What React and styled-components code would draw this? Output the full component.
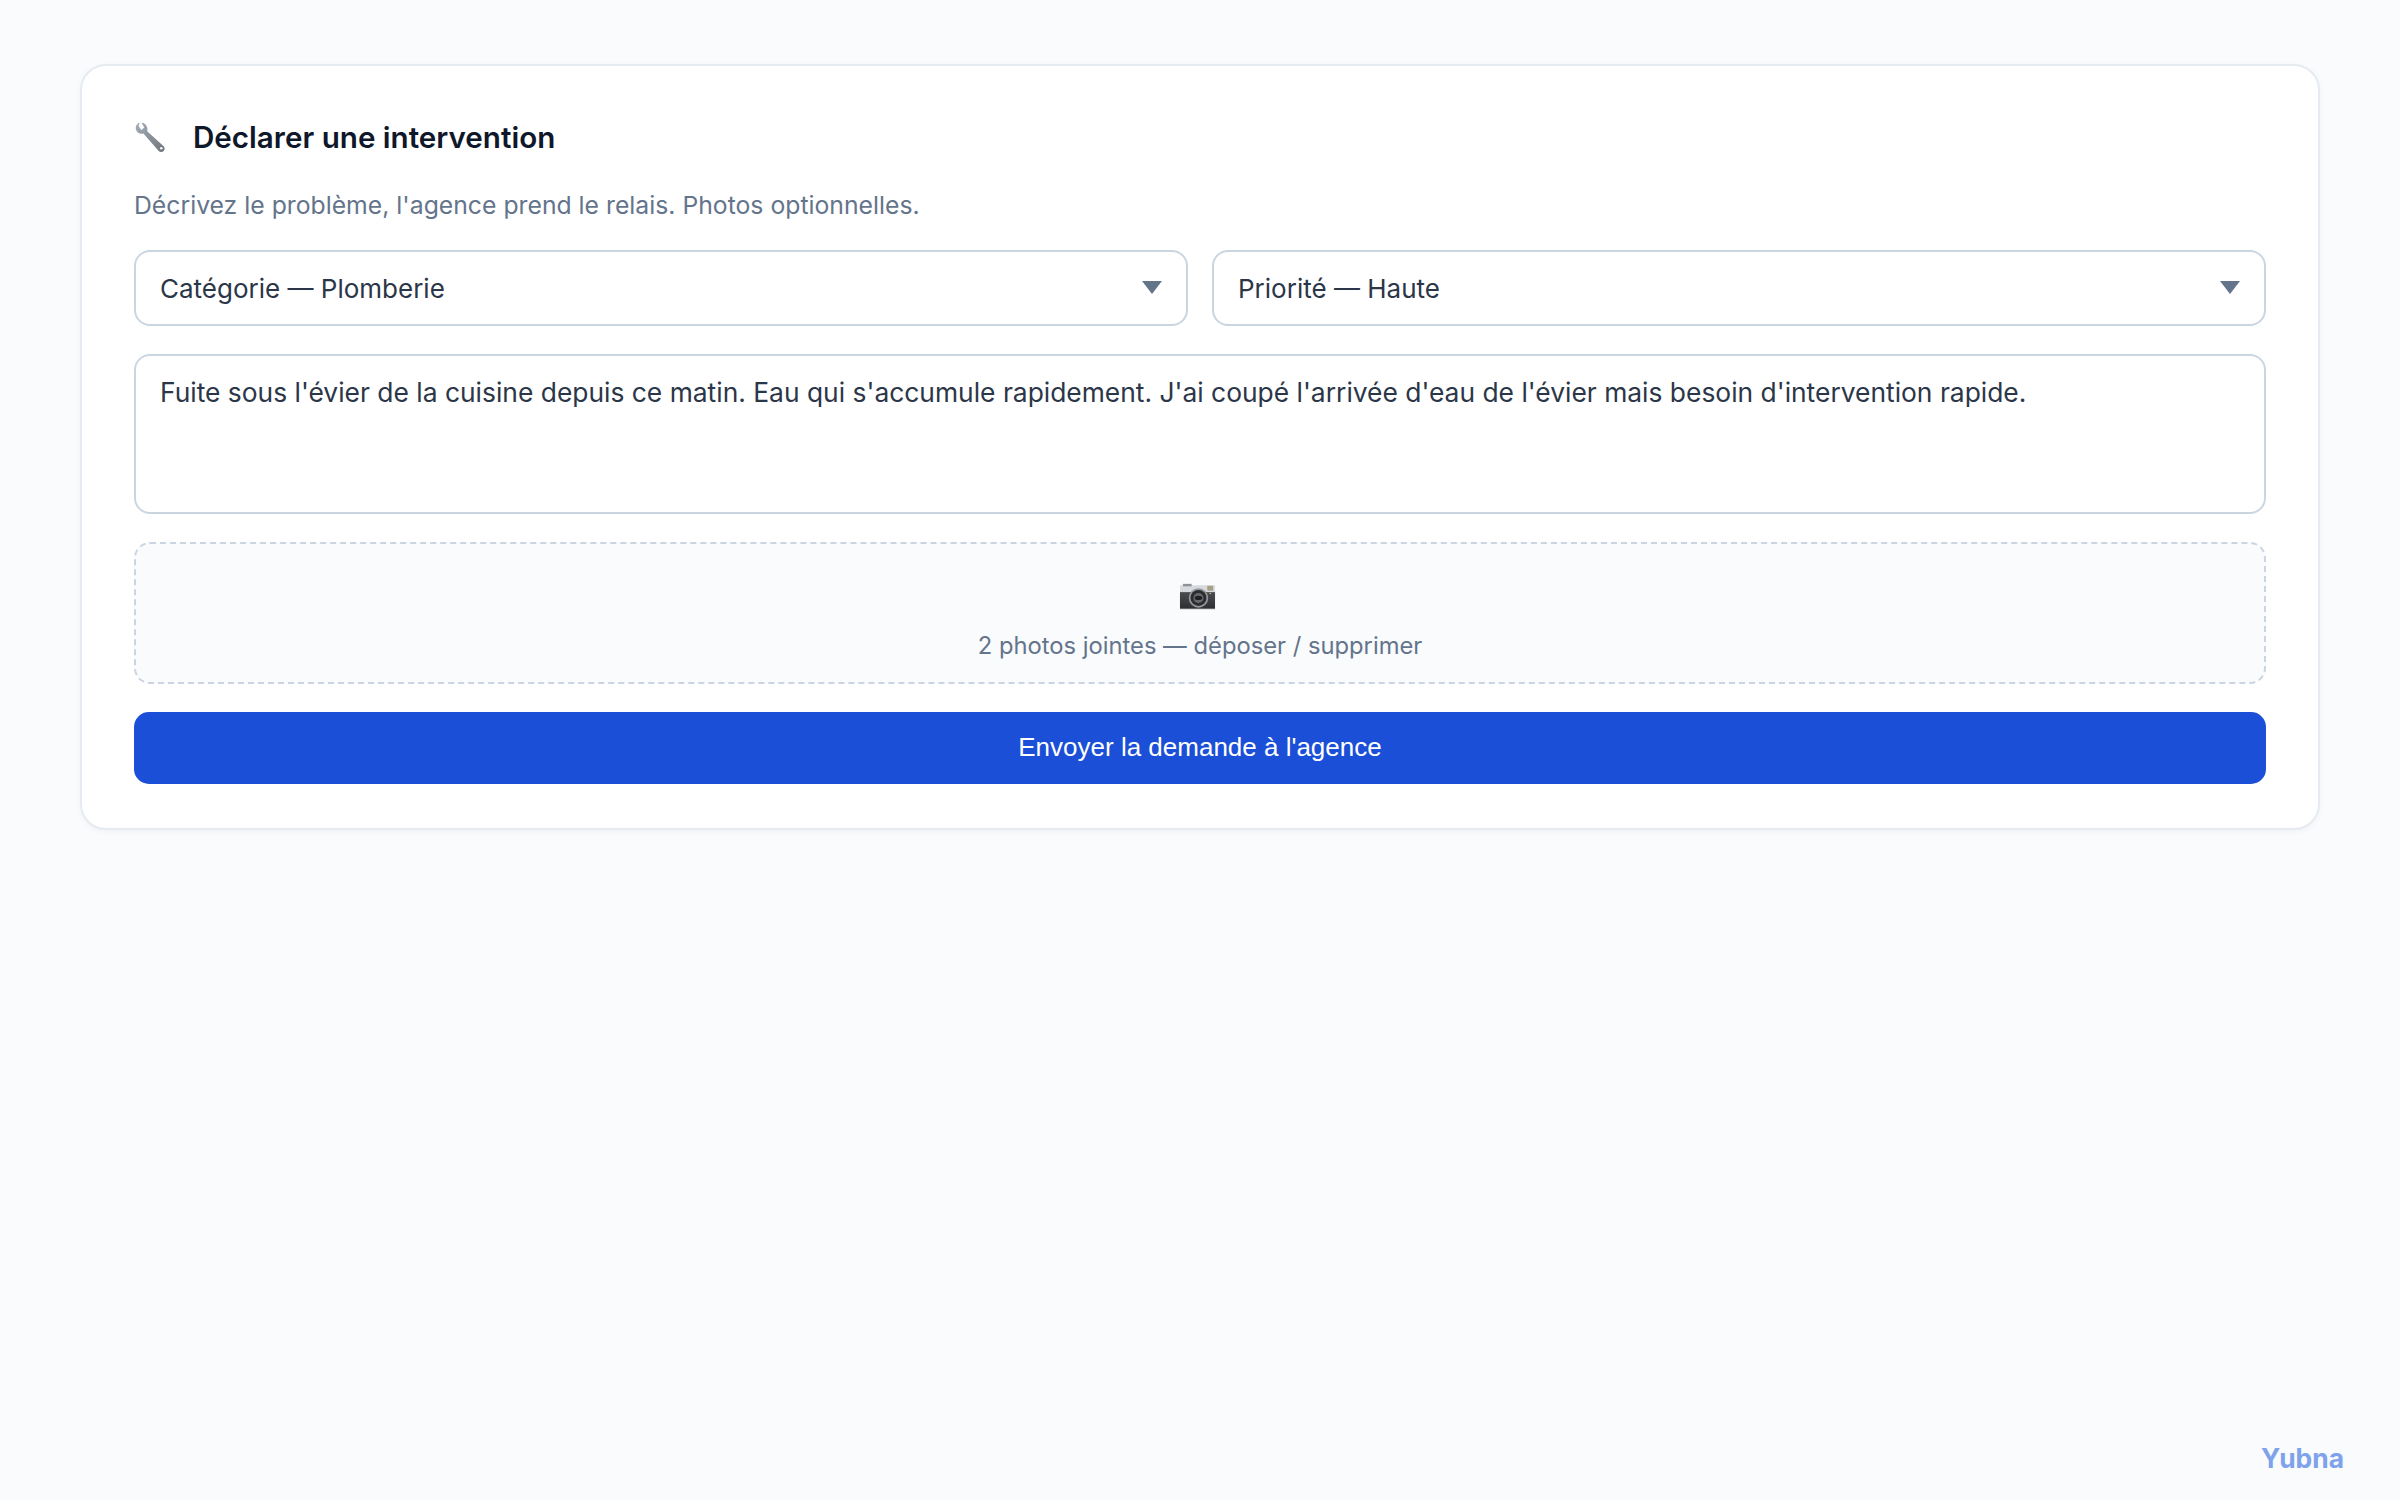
import React from "react";
import styled, { createGlobalStyle } from "styled-components";

const Global = createGlobalStyle`
  html, body { margin: 0; padding: 0; background: #f9fbfd; }
  * { box-sizing: border-box; }
  body { font-family: Inter, "Liberation Sans", sans-serif; }
`;
const Page = styled.div`
  position: relative;
  height: 1500px;
  padding: 64px 80px 0;
`;
const Card = styled.section`
  background: #fff;
  border: 2px solid #e6ebf2;
  border-radius: 26px;
  padding: 49px 52px 44px;
  box-shadow: 0 2px 6px rgba(15, 23, 42, 0.04);
  display: flex;
  flex-direction: column;
`;
const Header = styled.div`
  display: flex;
  align-items: center;
  gap: 27px;
  height: 44px;
`;
const Title = styled.h2`
  margin: 0;
  font-size: 29.6px;
  font-weight: 600;
  color: #0f172a;
`;
const Description = styled.p`
  margin: 27px 0 0;
  font-size: 24.75px;
  line-height: 38px;
  color: #64748b;
`;
const Row = styled.div`
  display: grid;
  grid-template-columns: 1fr 1fr;
  gap: 24px;
  margin-top: 26px;
`;
const Select = styled.div`
  height: 76px;
  display: flex;
  align-items: center;
  justify-content: space-between;
  padding: 0 24px;
  background: #fff;
  border: 2px solid #cbd5e1;
  border-radius: 16px;
  font-size: 26px;
  color: #2b3648;
`;
const Arrow = styled.svg`
  width: 20px;
  height: 13px;
  margin-top: -2px;
  fill: #64748b;
`;
const Area = styled.textarea`
  display: block;
  width: 100%;
  height: 160px;
  margin-top: 28px;
  padding: 18px 24px;
  background: #fff;
  border: 2px solid #cbd5e1;
  border-radius: 16px;
  font-family: Inter, sans-serif;
  font-size: 26.4px;
  line-height: 36px;
  color: #2b3648;
  resize: none;
  outline: none;
`;
const Drop = styled.div`
  height: 142px;
  margin-top: 28px;
  padding-top: 39px;
  display: flex;
  flex-direction: column;
  align-items: center;
  background: #f9fbfd;
  border: 2px dashed #cbd5e1;
  border-radius: 16px;
`;
const DropText = styled.div`
  margin-top: 18px;
  font-size: 23.76px;
  line-height: 34px;
  color: #64748b;
`;
const Submit = styled.button`
  height: 72px;
  margin-top: 28px;
  padding: 0 0 2px;
  border: 0;
  border-radius: 15px;
  background: #1b4fd8;
  color: #fff;
  font-family: "Liberation Sans", Arial, sans-serif;
  font-size: 26px;
  font-weight: 400;
`;
const Brand = styled.div`
  position: absolute;
  right: 56px;
  bottom: 25px;
  font-size: 26.4px;
  line-height: 34px;
  font-weight: 700;
  color: #7fa3ea;
`;
const CameraIcon = styled.svg`
  margin-right: 5px;
`;

const Wrench = () => (
  <svg width="32" height="32" viewBox="0 0 34 34">
    <defs>
      <linearGradient id="wr" x1="0" y1="0" x2="1" y2="1">
        <stop offset="0" stopColor="#a4aeb7" />
        <stop offset="1" stopColor="#707479" />
      </linearGradient>
    </defs>
    <path
      d="M6 1.5 C2.5 3 1 6.5 2.5 10 C4 13 7 14 10 13.2 L26 31.5 C27.5 33.2 30 33.2 31.5 31.8 C33 30.3 32.8 28 31.2 26.6 L14 11 C15 7.5 13.5 3.8 10 2 L9 1.8 L8.2 2.3 L11 7 L7.8 9.5 L4.9 5.3 Z"
      fill="url(#wr)"
    />
    <circle cx="29" cy="29" r="1.4" fill="#f2f4f6" />
  </svg>
);

const Camera = () => (
  <CameraIcon width="37" height="28" viewBox="0 0 38 28">
    <defs>
      <linearGradient id="cam" x1="0" y1="0" x2="0" y2="1">
        <stop offset="0" stopColor="#4b4c50" />
        <stop offset="1" stopColor="#2e2f32" />
      </linearGradient>
    </defs>
    <rect x="1" y="2" width="36" height="25" rx="1" fill="#d7dadd" />
    <rect x="4" y="0.5" width="9" height="2.5" fill="#8f9398" />
    <rect x="29" y="2.5" width="6" height="5" fill="#a5a184" />
    <rect x="1" y="9" width="36" height="17" fill="url(#cam)" />
    <circle cx="20" cy="15" r="10" fill="#94979b" />
    <circle cx="20" cy="15" r="8.2" fill="#2c2d30" />
    <circle cx="20" cy="15" r="5.2" fill="#67696d" />
    <ellipse cx="20" cy="15" rx="3.8" ry="2.2" fill="#1f2023" />
    <circle cx="32" cy="10.5" r="0.8" fill="#d8c95a" />
  </CameraIcon>
);

const Caret = () => (
  <Arrow viewBox="0 0 20 13">
    <path d="M0 0 H20 L10 13 Z" />
  </Arrow>
);

export default function App() {
  return (
    <Page>
      <Global />
      <Card>
        <Header>
          <Wrench />
          <Title>Déclarer une intervention</Title>
        </Header>
        <Description>Décrivez le problème, l'agence prend le relais. Photos optionnelles.</Description>
        <Row>
          <Select>Catégorie — Plomberie<Caret /></Select>
          <Select>Priorité — Haute<Caret /></Select>
        </Row>
        <Area
          readOnly
          defaultValue="Fuite sous l'évier de la cuisine depuis ce matin. Eau qui s'accumule rapidement. J'ai coupé l'arrivée d'eau de l'évier mais besoin d'intervention rapide."
        />
        <Drop>
          <Camera />
          <DropText>2 photos jointes — déposer / supprimer</DropText>
        </Drop>
        <Submit>Envoyer la demande à l'agence</Submit>
      </Card>
      <Brand>Yubna</Brand>
    </Page>
  );
}
